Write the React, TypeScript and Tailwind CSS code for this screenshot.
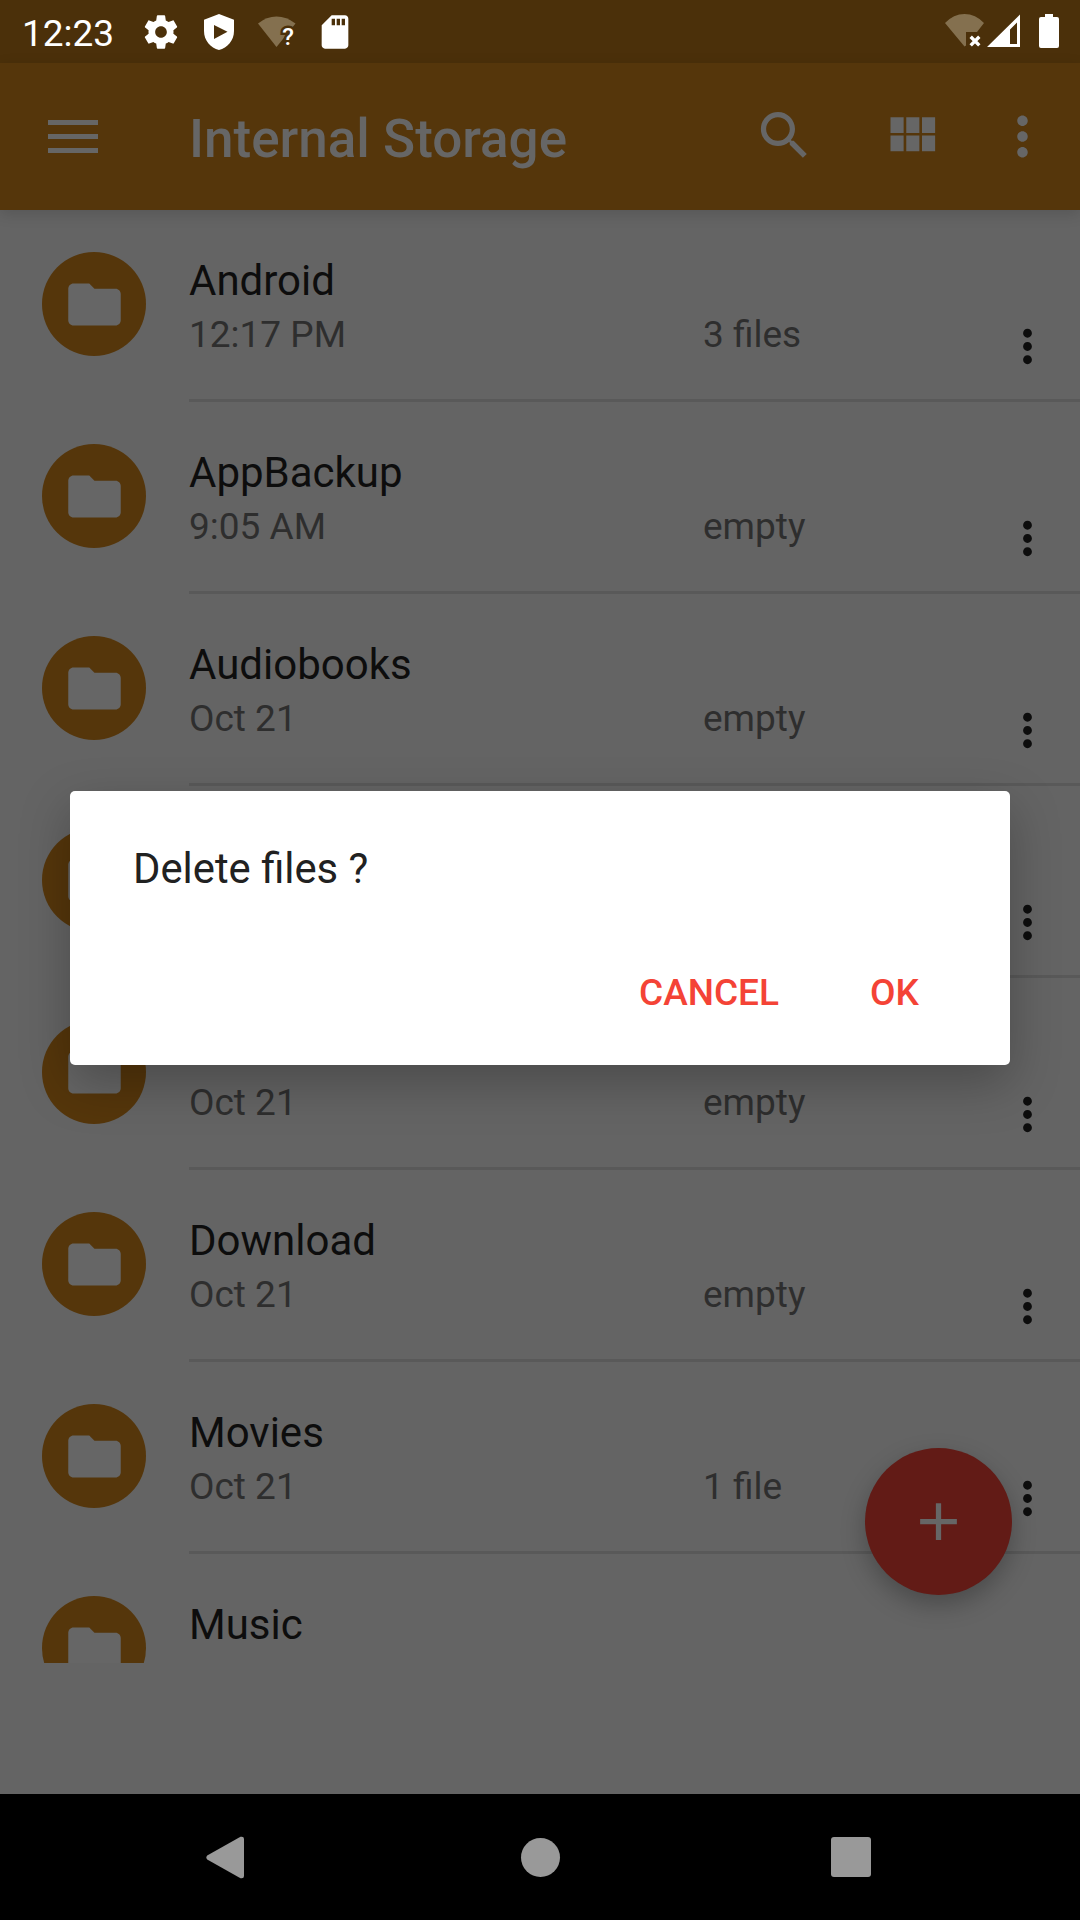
import React from "react";

type Entry = { name: string; date: string; count: string };

const entries: Entry[] = [
  { name: "Android", date: "12:17 PM", count: "3 files" },
  { name: "AppBackup", date: "9:05 AM", count: "empty" },
  { name: "Audiobooks", date: "Oct 21", count: "empty" },
  { name: "", date: "", count: "" },
  { name: "", date: "Oct 21", count: "empty" },
  { name: "Download", date: "Oct 21", count: "empty" },
  { name: "Movies", date: "Oct 21", count: "1 file" },
  { name: "Music", date: "", count: "" },
];

const MORE =
  "M12 8c1.1 0 2-.9 2-2s-.9-2-2-2-2 .9-2 2 .9 2 2 2zm0 2c-1.1 0-2 .9-2 2s.9 2 2 2 2-.9 2-2-.9-2-2-2zm0 6c-1.1 0-2 .9-2 2s.9 2 2 2 2-.9 2-2-.9-2-2-2z";

function Icon({ d, className }: { d: string; className: string }) {
  return (
    <svg viewBox="0 0 24 24" className={className} fill="currentColor" fillRule="evenodd">
      <path d={d} />
    </svg>
  );
}

function StatusBar() {
  return (
    <header className="flex h-[63px] items-start bg-[#4b300a] pl-[22px] text-white">
      <span className="mt-[12px] w-[119px] text-[37px] leading-[43px]">12:23</span>
      <Icon
        className="mt-[12px] size-[40px] shrink-0"
        d="M19.43 12.98c.04-.32.07-.64.07-.98s-.03-.66-.07-.98l2.11-1.65c.19-.15.24-.42.12-.64l-2-3.46c-.12-.22-.39-.3-.61-.22l-2.49 1c-.52-.4-1.08-.73-1.69-.98l-.38-2.65C14.46 2.18 14.25 2 14 2h-4c-.25 0-.46.18-.49.42l-.38 2.65c-.61.25-1.17.59-1.69.98l-2.49-1c-.23-.09-.49 0-.61.22l-2 3.46c-.13.22-.07.49.12.64l2.11 1.65c-.04.32-.07.65-.07.98s.03.66.07.98l-2.11 1.65c-.19.15-.24.42-.12.64l2 3.46c.12.22.39.3.61.22l2.49-1c.52.4 1.08.73 1.69.98l.38 2.65c.03.24.24.42.49.42h4c.25 0 .46-.18.49-.42l.38-2.65c.61-.25 1.17-.59 1.69-.98l2.49 1c.23.09.49 0 .61-.22l2-3.46c.12-.22.07-.49-.12-.64l-2.11-1.65zM12 15.5c-1.93 0-3.5-1.57-3.5-3.5s1.57-3.5 3.5-3.5 3.5 1.57 3.5 3.5-1.57 3.5-3.5 3.5z"
      />
      <svg viewBox="0 0 30 36" className="mt-[14px] ml-[23px] h-[36px] w-[30px] shrink-0" fill="currentColor" fillRule="evenodd">
        <path d="M15 0 30 5.8V17C30 26.5 23.5 33.8 15 36 6.5 33.8 0 26.5 0 17V5.8ZM10 11V25L23.5 17.8Z" />
      </svg>
      <svg viewBox="0 0 40 34" className="mt-[15px] ml-[23px] h-[34px] w-[40px] shrink-0">
        <path d="M1 8.5Q9.500 1.500 19.500 1.500T38.500 8.500L19.500 32Z" fill="#84704f" />
        <text
          x="25.300"
          y="30"
          fontSize="24"
          fontWeight="500"
          fontFamily="Roboto"
          fill="#fff"
          stroke="#4b300a"
          strokeWidth="5"
          paintOrder="stroke"
        >
          ?
        </text>
      </svg>
      <Icon
        className="mt-[11.500px] ml-[18px] size-[40px] shrink-0"
        d="M18 2h-8L4.020 8 4 20c0 1.100.9 2 2 2h12c1.100 0 2-.9 2-2V4c0-1.100-.9-2-2-2zm-6 6h-2V4h2v4zm3 0h-2V4h2v4zm3 0h-2V4h2v4z"
      />
      <svg viewBox="0 0 116 36" className="mt-[13px] mr-[20px] ml-auto h-[36px] w-[116px] shrink-0">
        <path d="M1 10Q9.500 1 20.500 1T40 10L33 19H22V32.500L20.500 33.500Z" fill="#84704f" />
        <path d="M26.700 23.800 35.300 32.400M35.300 23.800 26.700 32.400" stroke="#fff" strokeWidth="3.400" />
        <path d="M76 1.500V34H43ZM73 9.500 66 16.500V31H73Z" fill="#fff" fillRule="evenodd" />
        <path d="M101 1h8v3h4q2 0 2 2v27q0 2-2 2H97q-2 0-2-2V6q0-2 2-2h4Z" fill="#fff" />
      </svg>
    </header>
  );
}

function Toolbar() {
  return (
    <div className="relative z-10 flex h-[147px] items-center bg-[#55360b] pl-[48px] text-[#666666] shadow-[0_4px_14px_rgba(0,0,0,0.14)]">
      <div className="flex w-[50px] flex-col gap-[9px]">
        <span className="h-[5.250px] bg-current" />
        <span className="h-[5.250px] bg-current" />
        <span className="h-[5.250px] bg-current" />
      </div>
      <h1 className="mt-[4px] ml-[91px] w-[564px] text-[53px] leading-[62px] font-medium">Internal Storage</h1>
      <Icon
        className="mb-[2px] size-[63px] shrink-0"
        d="M15.500 14h-.79l-.28-.27C15.410 12.590 16 11.110 16 9.500 16 5.910 13.090 3 9.500 3S3 5.910 3 9.500 5.910 16 9.500 16c1.610 0 3.090-.59 4.230-1.570l.27.28v.79l5 4.990L20.490 19l-4.990-5zm-6 0C7.010 14 5 11.990 5 9.500S7.010 5 9.500 5 14 7.010 14 9.500 11.990 14 9.500 14z"
      />
      <Icon
        className="mb-[2px] ml-[64px] size-[63px] shrink-0"
        d="M4 11h5V5H4v6zm0 7h5v-6H4v6zm6 0h5v-6h-5v6zm6 0h5v-6h-5v6zm-6-7h5V5h-5v6zm6-6v6h5V5h-5z"
      />
      <Icon className="ml-[48px] size-[63px] shrink-0" d={MORE} />
    </div>
  );
}

function Row({ entry }: { entry: Entry }) {
  return (
    <li className="flex h-[192px] shrink-0 pl-[42px]">
      <div className="mt-[42px] flex size-[104px] items-center justify-center rounded-full bg-[#55360b] text-[#666666]">
        <Icon
          className="size-[63px]"
          d="M10 4H4c-1.100 0-1.990.9-1.990 2L2 18c0 1.100.9 2 2 2h16c1.100 0 2-.9 2-2V8c0-1.100-.9-2-2-2h-8l-2-2z"
        />
      </div>
      <div className="ml-[43px] flex flex-1 border-b-[3px] border-[#595959]">
        <div className="w-[514px] pt-[46px]">
          <p className="h-[49px] text-[42px] leading-[49px] text-[#0d0d0d]">{entry.name}</p>
          <p className="mt-[8px] text-[37px] leading-[43px] text-[#2e2e2e]">{entry.date}</p>
        </div>
        <p className="mt-[103px] w-[298px] text-[37px] leading-[43px] text-[#2e2e2e]">{entry.count}</p>
        <Icon className="mt-[110px] size-[53px] shrink-0 text-[#0d0d0d]" d={MORE} />
      </div>
    </li>
  );
}

function Dialog() {
  return (
    <div className="absolute top-[791px] left-[70px] z-20 flex h-[274px] w-[940px] flex-col rounded-[5px] bg-white shadow-[0_18px_50px_rgba(0,0,0,0.26)]">
      <p className="mt-[53px] ml-[63px] text-[41.800px] leading-[49px] text-[#212121]">Delete files ?</p>
      <div className="mt-[78px] flex text-[37px] leading-[43px] font-medium text-[#f44336]">
        <button className="ml-[569px] w-[231px] text-left">CANCEL</button>
        <button className="text-left">OK</button>
      </div>
    </div>
  );
}

function NavBar() {
  return (
    <nav className="flex h-[126px] items-center justify-between bg-black pr-[209px] pl-[206px] text-[#999999]">
      <svg viewBox="0 0 38 43" className="h-[43px] w-[38px]" fill="currentColor">
        <path d="M1.200 19.500 34.500.8Q38 0 38 3V40Q38 43 34.500 42.200L1.200 23.500Q-.5 21.500 1.200 19.500Z" />
      </svg>
      <span className="ml-[5px] size-[39px] rounded-full bg-current" />
      <span className="size-[40px] rounded-[3px] bg-current" />
    </nav>
  );
}

export default function App() {
  return (
    <div className="relative flex h-[1920px] w-[1080px] flex-col overflow-hidden bg-[#646464] font-['Roboto',sans-serif]">
      <StatusBar />
      <Toolbar />
      <main className="h-[1584px] shrink-0">
        <ul className="flex h-[1453px] flex-col overflow-hidden">
          {entries.map((e, i) => (
            <Row key={i} entry={e} />
          ))}
        </ul>
      </main>
      <NavBar />
      <button className="absolute top-[1448px] left-[865px] z-10 flex size-[147px] items-center justify-center rounded-full bg-[#621b16] text-[#666666] shadow-[0_10px_24px_rgba(0,0,0,0.26)]">
        <Icon className="size-[63px]" d="M19 13h-6v6h-2v-6H5v-2h6V5h2v6h6v2z" />
      </button>
      <Dialog />
    </div>
  );
}
